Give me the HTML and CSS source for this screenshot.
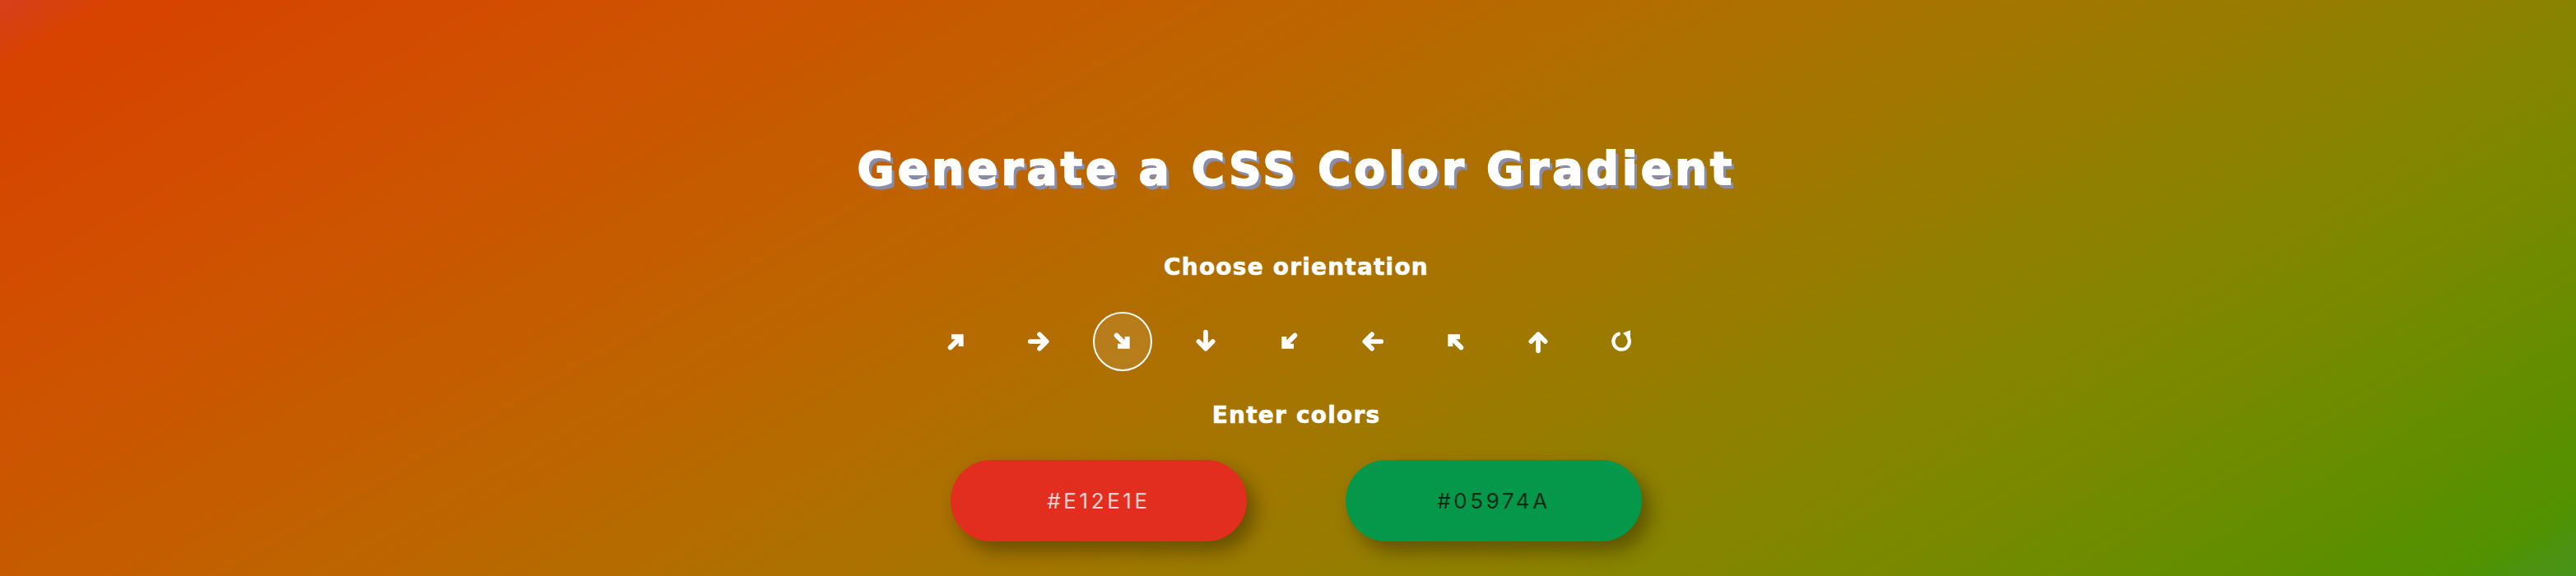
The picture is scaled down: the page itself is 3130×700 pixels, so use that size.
FILE: index.html
```html
<!DOCTYPE html>
<html lang="en">
<head>
<meta charset="utf-8">
<title>CSS Color Gradient</title>
<link rel="stylesheet" href="styles.css">
</head>
<body>
<svg class="defs" width="0" height="0" aria-hidden="true">
  <symbol id="arr" viewBox="0 0 24 24">
    <path d="M3.5 12H18.5M12 5.5L18.5 12L12 18.5" fill="none" stroke="currentColor" stroke-width="4.2" stroke-linecap="round" stroke-linejoin="round"/>
  </symbol>
  <symbol id="diag" viewBox="0 0 24 24">
    <path d="M6.5 17.5L15.5 8.5" fill="none" stroke="currentColor" stroke-width="4.4" stroke-linecap="round"/>
    <path d="M7.5 5.5H18.5V16.5H14V10H7.5Z" fill="currentColor"/>
  </symbol>
  <symbol id="redo" viewBox="0 0 24 24">
    <path d="M9.6 5.1A7.3 7.3 0 1 0 18.2 8" fill="none" stroke="currentColor" stroke-width="3.2" stroke-linecap="round"/>
    <path d="M14.2 4.6L19.8 2.4L19.6 9.6Z" fill="currentColor" stroke="currentColor" stroke-width="1" stroke-linejoin="round"/>
  </symbol>
</svg>
<main class="page">
  <h1 class="title">Generate a CSS Color Gradient</h1>
  <h2 class="label label-orient">Choose orientation</h2>
  <div class="orient">
    <button class="dir"><svg class="ico r0"><use href="#diag"/></svg></button>
    <button class="dir"><svg class="ico r0"><use href="#arr"/></svg></button>
    <button class="dir active"><svg class="ico r90"><use href="#diag"/></svg></button>
    <button class="dir"><svg class="ico r90"><use href="#arr"/></svg></button>
    <button class="dir"><svg class="ico r180"><use href="#diag"/></svg></button>
    <button class="dir"><svg class="ico r180"><use href="#arr"/></svg></button>
    <button class="dir"><svg class="ico r270"><use href="#diag"/></svg></button>
    <button class="dir"><svg class="ico r270"><use href="#arr"/></svg></button>
    <button class="dir"><svg class="ico"><use href="#redo"/></svg></button>
  </div>
  <h2 class="label label-colors">Enter colors</h2>
  <div class="colors">
    <div class="pill pill-red">#E12E1E</div>
    <div class="pill pill-green">#05974A</div>
  </div>
</main>
</body>
</html>
```
FILE: styles.css
```css
html, body {
  margin: 0;
  padding: 0;
}
body {
  height: 700px;
  overflow: hidden;
  background: linear-gradient(in oklch 150deg, #d8401a 0%, #46931a 100%);
  font-family: "DejaVu Sans", Inter, sans-serif;
  color: #fff;
}
.defs {
  position: absolute;
}
.page {
  display: flex;
  flex-direction: column;
  align-items: center;
  padding-top: 177px;
  padding-left: 20px;
}
.title {
  margin: 0;
  font-size: 55px;
  line-height: 56px;
  font-weight: 700;
  letter-spacing: 4px;
  -webkit-text-stroke: 1.8px #fff;
  text-shadow: 4px 5px 0 #8b8ca6;
}
.label {
  margin: 0;
  font-size: 28px;
  line-height: 29px;
  font-weight: 700;
  letter-spacing: 1.2px;
  -webkit-text-stroke: 0.6px #fff;
}
.label-orient {
  margin-top: 77px;
}
.label-colors {
  margin-top: 39px;
}
.orient {
  display: flex;
  gap: 29px;
  margin-top: 40px;
  padding-right: 18px;
}
.dir {
  width: 72px;
  height: 72px;
  padding: 0;
  border: 2px solid transparent;
  border-radius: 50%;
  background: transparent;
  color: #fff;
  display: flex;
  align-items: center;
  justify-content: center;
}
.dir.active {
  border-color: #fff;
  background: rgba(255, 255, 255, 0.1);
}
.ico {
  width: 32px;
  height: 32px;
}
.r90 { transform: rotate(90deg); }
.r180 { transform: rotate(180deg); }
.r270 { transform: rotate(270deg); }
.colors {
  display: flex;
  gap: 120px;
  margin-top: 40px;
}
.pill {
  width: 360px;
  height: 99px;
  border-radius: 50px;
  display: flex;
  align-items: center;
  justify-content: center;
  font-family: Inter, "Noto Sans", sans-serif;
  font-size: 26px;
  font-weight: 400;
  letter-spacing: 3.6px;
  box-shadow: 10px 12px 22px rgba(40, 30, 0, 0.45);
}
.pill-red {
  background: #e12e1e;
  color: rgba(255, 255, 255, 0.78);
}
.pill-green {
  background: #05974a;
  color: rgba(0, 0, 0, 0.72);
}
```
